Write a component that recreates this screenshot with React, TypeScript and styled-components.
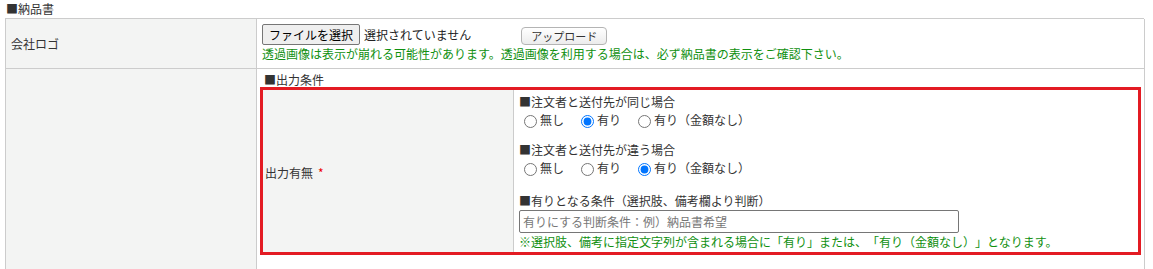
import React from "react";
import styled, { createGlobalStyle } from "styled-components";

const GlobalStyle = createGlobalStyle`
  html, body { margin: 0; padding: 0; background: #fff; }
  body {
    font-family: "Noto Sans CJK JP", "Noto Sans", sans-serif;
    font-size: 12px;
    color: #333;
  }
  * { box-sizing: border-box; }
`;

const Page = styled.div`
  padding-left: 5px;
  width: 1144px;
`;

const SectionTitle = styled.div`
  height: 18px;
  line-height: 16px;
  padding: 1px 0 0 1px;
`;

const FormGrid = styled.div`
  display: grid;
  grid-template-columns: 251px 888px;
  border-left: 1px solid #ccc;
  border-top: 1px solid #ccc;
`;

const LabelCell = styled.div`
  background: #f3f4f3;
  border-right: 1px solid #ccc;
  border-bottom: 1px solid #ccc;
  display: flex;
  align-items: center;
  padding-left: 5px;
  line-height: 18px;
`;

const ValueCell = styled.div<{ $pad: string }>`
  border-right: 1px solid #ccc;
  border-bottom: 1px solid #ccc;
  padding: ${(p) => p.$pad};
  line-height: 18px;
`;

const FileRow = styled.div`
  display: flex;
  align-items: flex-end;
  height: 21px;
`;

const FileButton = styled.button`
  font: inherit;
  font-size: 12px;
  height: 21px;
  padding: 0 6px;
  margin: 0 4px 0 0;
  border: 1px solid #767676;
  border-radius: 2px;
  background: #efefef;
  color: #000;
  line-height: 19px;
`;

const FileStatus = styled.span`
  line-height: 21px;
  color: #222;
`;

const UploadButton = styled.button`
  font: inherit;
  font-size: 11px;
  height: 18px;
  margin-left: 50px;
  padding: 0 9px;
  border: 1px solid #b4b4b4;
  border-radius: 4px;
  background: linear-gradient(#ffffff, #ececec);
  color: #333;
  line-height: 16px;
`;

const Note = styled.div`
  color: #109010;
  line-height: 18px;
  white-space: nowrap;
  text-spacing-trim: space-all;
`;

const SubTitle = styled.div`
  line-height: 15px;
  height: 15px;
  padding-left: 4px;
`;

const RedBox = styled.div`
  border: 3px solid #e31b23;
  display: grid;
  grid-template-columns: 251px 623px;
`;

const InnerLabel = styled.div`
  background: #f3f4f3;
  border-right: 1px solid #ccc;
  display: flex;
  align-items: center;
  padding: 4px 0 0 2px;
`;

const Required = styled.span`
  color: #e00;
  margin-left: 5px;
`;

const InnerValue = styled.div`
  padding: 3px 0 1px 5px;
  display: flex;
  flex-direction: column;
`;

const GroupTitle = styled.div<{ $gap?: number }>`
  line-height: 18px;
  margin-top: ${(p) => p.$gap ?? 0}px;
`;

const RadioRow = styled.div`
  display: flex;
  align-items: center;
  height: 18px;
`;

const RadioLabel = styled.label`
  display: inline-flex;
  align-items: center;
  margin-right: 12px;
  line-height: 18px;
  input {
    width: 13px;
    height: 13px;
    margin: 2px 3px 0 5px;
  }
`;

const CondInput = styled.input`
  font: inherit;
  font-size: 12px;
  width: 440px;
  height: 23px;
  border: 1px solid #767676;
  border-radius: 2px;
  padding: 0 3px;
  color: #333;
  &::placeholder { color: #777; }
`;

type Opt = { label: string; checked?: boolean };

const RadioGroup: React.FC<{ name: string; options: Opt[] }> = ({ name, options }) => (
  <RadioRow>
    {options.map((o) => (
      <RadioLabel key={o.label}>
        <input type="radio" name={name} defaultChecked={o.checked} />
        {o.label}
      </RadioLabel>
    ))}
  </RadioRow>
);

export default function App() {
  return (
    <>
      <GlobalStyle />
      <Page>
        <SectionTitle>■納品書</SectionTitle>
        <FormGrid>
          <LabelCell>会社ロゴ</LabelCell>
          <ValueCell $pad="5px 2px 5px 5px">
            <FileRow>
              <FileButton type="button">ファイルを選択</FileButton>
              <FileStatus>選択されていません</FileStatus>
              <UploadButton type="button">アップロード</UploadButton>
            </FileRow>
            <Note>
              透過画像は表示が崩れる可能性があります。透過画像を利用する場合は、必ず納品書の表示をご確認下さい。
            </Note>
          </ValueCell>
          <LabelCell />
          <ValueCell $pad="3px 3px 20px 3px">
            <SubTitle>■出力条件</SubTitle>
            <RedBox>
              <InnerLabel>
                出力有無<Required>*</Required>
              </InnerLabel>
              <InnerValue>
                <GroupTitle>■注文者と送付先が同じ場合</GroupTitle>
                <RadioGroup
                  name="same"
                  options={[{ label: "無し" }, { label: "有り", checked: true }, { label: "有り（金額なし）" }]}
                />
                <GroupTitle $gap={12}>■注文者と送付先が違う場合</GroupTitle>
                <RadioGroup
                  name="diff"
                  options={[{ label: "無し" }, { label: "有り" }, { label: "有り（金額なし）", checked: true }]}
                />
                <GroupTitle $gap={15}>■有りとなる条件（選択肢、備考欄より判断）</GroupTitle>
                <CondInput type="text" placeholder="有りにする判断条件：例）納品書希望" />
                <Note>
                  ※選択肢、備考に指定文字列が含まれる場合に「有り」または、「有り（金額なし）」となります。
                </Note>
              </InnerValue>
            </RedBox>
          </ValueCell>
        </FormGrid>
      </Page>
    </>
  );
}
